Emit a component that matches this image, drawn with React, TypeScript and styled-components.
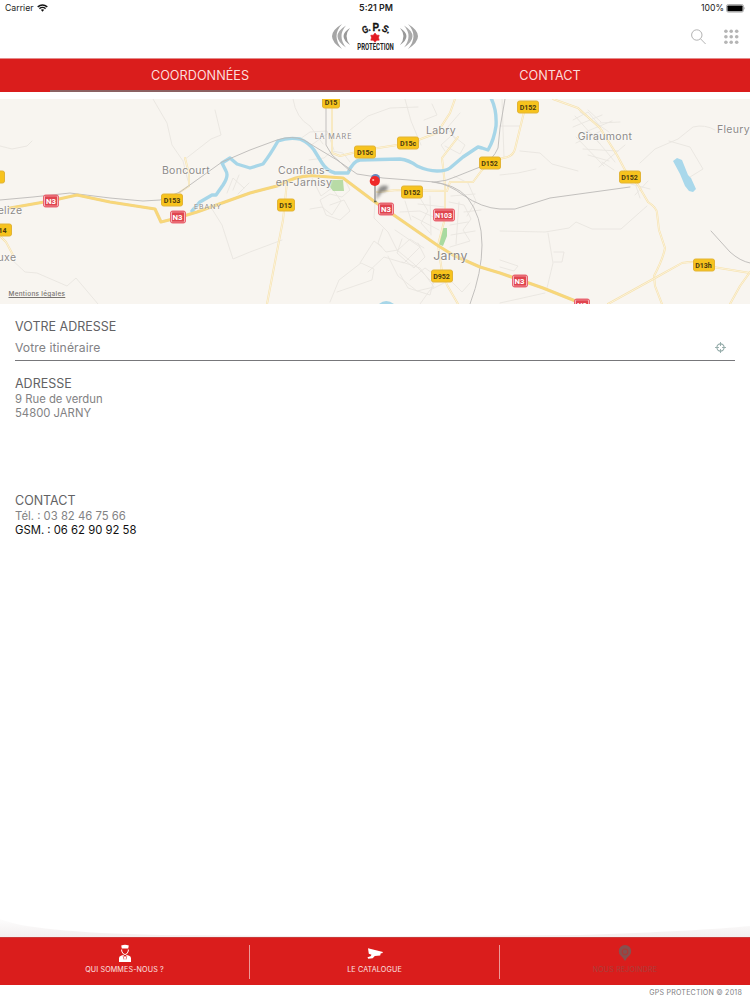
import React from 'react';
import styled, { createGlobalStyle } from 'styled-components';

const GlobalStyle = createGlobalStyle`
  * {
    box-sizing: border-box;
  }
  body {
    margin: 0;
    background: #fff;
    font-family: Inter, 'Liberation Sans', sans-serif;
    color: #5c5c5e;
  }
`;

const Page = styled.div`
  width: 750px;
  height: 1000px;
  display: flex;
  flex-direction: column;
  overflow: hidden;
`;

const StatusBar = styled.div`
  height: 16px;
  padding: 0 4px 0 5px;
  display: grid;
  grid-template-columns: 1fr auto 1fr;
  align-items: center;
  font-size: 8.7px;
  line-height: 16px;
  color: #222;
`;

const StatusSide = styled.div<{ $end?: boolean }>`
  display: flex;
  align-items: center;
  justify-content: ${({ $end }) => ($end ? 'flex-end' : 'flex-start')};
  gap: ${({ $end }) => ($end ? '2px' : '4px')};
`;

const Clock = styled.div`
  font-weight: 600;
  font-size: 8.9px;
  padding-left: 1px;
`;

const Header = styled.header`
  height: 43px;
  display: grid;
  grid-template-columns: 1fr 86px 1fr;
  border-bottom: 1px solid #e58a8a;
`;

const HeaderActions = styled.div`
  display: flex;
  justify-content: flex-end;
  gap: 17px;
  padding: 13px 10px 0 0;
`;

const Logo = styled.svg`
  grid-column: 2;
  display: block;
`;

const Tabs = styled.nav`
  height: 33px;
  flex: none;
  display: flex;
  padding: 0 50px;
  background: #da1d1c;
`;

const Tab = styled.div<{ $active?: boolean }>`
  width: 300px;
  padding-top: 2px;
  display: flex;
  align-items: center;
  justify-content: center;
  font-size: 12.7px;
  color: #fbdcdb;
  border-bottom: 2px solid ${({ $active }) => ($active ? '#8b6263' : '#da1d1c')};

  & + & {
    width: 400px;
    margin-right: -50px;
  }
`;

const MapView = styled.div`
  position: relative;
  flex: none;
  width: 750px;
  height: 205px;
  margin-top: 7px;
  overflow: hidden;
  background: #f8f5f0;

  > svg {
    display: block;
  }
`;

const Place = styled.span<{ $x: number; $y: number; $size?: number; $spacing?: number }>`
  position: absolute;
  left: ${({ $x }) => $x}px;
  top: ${({ $y }) => $y - 99}px;
  transform: translate(-50%, -50%);
  font-size: ${({ $size }) => $size || 10.5}px;
  letter-spacing: ${({ $spacing }) => $spacing ?? 0.35}px;
  line-height: 12px;
  text-align: center;
  white-space: pre;
  color: #8d8a87;
  text-shadow: 0 0 2px #fff, 0 0 2px #fff;
`;

const Shield = styled.span<{ $x: number; $y: number; $national?: boolean; $wide?: boolean }>`
  position: absolute;
  left: ${({ $x }) => $x}px;
  top: ${({ $y }) => $y - 99}px;
  transform: translate(-50%, -50%);
  width: ${({ $wide, $national }) => ($wide ? 22 : $national ? 16 : 18)}px;
  height: 13px;
  display: flex;
  align-items: center;
  justify-content: center;
  border-radius: 2.5px;
  border: 1px solid ${({ $national }) => ($national ? '#ea6672' : '#e2b437')};
  box-shadow: ${({ $national }) => ($national ? 'inset 0 0 0 0.8px #fbd0d3' : 'none')};
  background: ${({ $national }) => ($national ? '#e0454f' : '#f7c31d')};
  color: ${({ $national }) => ($national ? '#fff' : '#4a3a10')};
  font-family: Roboto, 'Liberation Sans', sans-serif;
  font-size: ${({ $national, $wide }) => ($national && !$wide ? 7.8 : 7.1)}px;
  letter-spacing: -0.1px;
  font-weight: 700;
`;

const Legal = styled.a`
  position: absolute;
  left: 8.5px;
  bottom: 5px;
  font-size: 6.4px;
  line-height: 10px;
  letter-spacing: 0.31px;
  font-weight: 500;
  color: #77736f;
  text-decoration: underline;
`;

const Content = styled.main`
  flex: 1;
  display: flex;
  flex-direction: column;
  padding: 15px 15px 0;
`;

const Title = styled.h2`
  margin: 0;
  font-size: 12.5px;
  line-height: 16px;
  font-weight: 400;
  color: #626264;
`;

const RouteField = styled.div`
  height: 26px;
  padding: 0 9px 1px 0;
  margin-bottom: 15px;
  display: flex;
  align-items: center;
  justify-content: space-between;
  border-bottom: 1px solid #77777a;
  font-size: 12.2px;
  letter-spacing: 0.08px;
  color: #828285;
`;

const Block = styled.section`
  height: 117px;
`;

const Line = styled.div<{ $dark?: boolean }>`
  font-size: 11.3px;
  line-height: 14px;
  color: ${({ $dark }) => ($dark ? '#111' : '#828284')};
`;

const Swoosh = styled.svg`
  display: block;
  flex: none;
`;

const BottomBar = styled.nav`
  flex: none;
  height: 48px;
  display: grid;
  grid-template-columns: 250px 250px 250px;
  align-items: center;
  background: #da1d1c;
  border-top: 1px solid #c93a3a;
`;

const BottomItem = styled.div<{ $muted?: boolean }>`
  height: 34px;
  display: flex;
  flex-direction: column;
  align-items: center;
  gap: 3px;
  font-size: 7.2px;
  line-height: 8px;
  letter-spacing: 0.12px;
  color: ${({ $muted }) => ($muted ? '#ab403d' : '#fbe3e2')};
  border-right: 1px solid #ed9997;

  &:last-child {
    border-right: none;
  }
  > svg {
    margin-top: -1px;
  }
`;

const Copyright = styled.footer`
  flex: none;
  height: 15px;
  padding-right: 8px;
  text-align: right;
  font-size: 7.1px;
  line-height: 16px;
  letter-spacing: 0.2px;
  color: #828284;
`;

const places = [
  { text: 'Boncourt', x: 186, y: 171 },
  { text: 'elize', x: 10, y: 211 },
  { text: 'uxe', x: 7, y: 257.5 },
  { text: 'EBANY', x: 208, y: 206.5, size: 6.8, spacing: 1 },
  { text: 'LA MARE', x: 333.5, y: 137, size: 7.2, spacing: 0.9 },
  { text: 'Conflans-\nen-Jarnisy', x: 304, y: 176.5 },
  { text: 'Labry', x: 441, y: 130.5 },
  { text: 'Jarny', x: 450.5, y: 256, size: 12.3 },
  { text: 'Giraumont', x: 605, y: 137 },
  { text: 'Fleury', x: 733.5, y: 130 },
];

const shields = [
  { text: 'D15', x: 331, y: 102 },
  { text: 'D15c', x: 365, y: 151.5, wide: true },
  { text: 'D15c', x: 408, y: 143, wide: true },
  { text: 'D152', x: 489.5, y: 163, wide: true },
  { text: 'D152', x: 412, y: 192, wide: true },
  { text: 'D15', x: 285.5, y: 204.5 },
  { text: 'D952', x: 441.5, y: 276, wide: true },
  { text: 'D152', x: 528, y: 106.5, wide: true },
  { text: 'D152', x: 629.5, y: 177, wide: true },
  { text: 'D13h', x: 703.5, y: 264.5, wide: true },
  { text: 'D153', x: 172, y: 199.5, wide: true },
  { text: '14', x: 2.5, y: 230 },
  { text: '3', x: -4, y: 177 },
  { text: 'N3', x: 51, y: 201, national: true },
  { text: 'N3', x: 177.5, y: 217, national: true },
  { text: 'N3', x: 386, y: 209, national: true },
  { text: 'N103', x: 443.5, y: 215, national: true, wide: true },
  { text: 'N3', x: 519.5, y: 281, national: true },
  { text: 'N3', x: 582, y: 304.5, national: true },
];

const nationalRoad =
  'M10 208L50 201L77 195L110 202L155 209L161 222L177 218L197 212L250 193L277 186Q300 174 316 176L343 178L375 202L437 245L453 255L480 267L500 273L543 288L573 300L584 305';

const river =
  'M192 211L200 202L212 195L216 195L223 185Q229 176 226 171L222 163L230 158L237 164L250 168L263 164Q270 155 278 141Q288 137 300 139Q309 143 314 150L322 163Q327 171 335 173L348 173Q353 161 360 160L400 159Q409 160 417 166Q428 171 437 171Q446 171 450 168L463 157L478 147L482 148L488 150Q494 140 496 126Q497 110 491 98';

const localRoads = [
  'M332 108L332 153L340 156L365 150L410 143L437 133L450 113L455 99',
  'M287 182L283 220L267 304',
  'M458 137L442 158L445 185L445 218L438 245L442 272L447 285L458 304',
  'M377 192L397 190L447 191L450 182L473 182L482 170L490 162L503 158Q513 157 515 149L524 112',
  'M553 99L578 108L600 128L617 155L625 170L638 185L648 202Q657 208 657 213L659 230L665 248Q663 259 654 276L655 286L662 304',
  'M608 304L655 278L682 263Q700 260 713 267L750 273',
  'M750 272L740 286L730 304',
  'M185 158L189 174L189 186L180 192',
  'M0 236L6 242L13 255',
];

const minorRoads = [
  'M153 99L167 123L172 145L183 161L188 181',
  'M215 110L221 135L211 139L184 160',
  'M0 146L12 149L27 146L32 141',
  'M10 258L25 272L37 273L67 286L76 278L98 304',
  'M212 209L222 225L233 259L250 252L282 240',
  'M293 99Q296 118 310 126L323 144',
  'M405 99L411 121L421 145',
  'M350 130L368 116L390 108L418 107',
  'M375 202L374 218L388 232L397 250L414 264L434 284',
  'M383 229L378 243L386 252L398 250L410 239L424 248',
  'M388 256L398 276L417 291L434 287L420 268L402 262',
  'M402 239L397 253L414 268L425 257L418 243',
  'M395 230L420 247L404 263L384 257L368 272',
  'M410 280L425 268L435 275L430 295L408 288L400 274',
  'M420 304L430 290L450 280L462 292L470 283',
  'M330 302L339 280L361 263L374 269L372 280L337 292',
  'M360 263L374 241L382 247',
  'M345 180L350 190L342 197L330 194L320 200L326 215L340 220L350 211L344 200L330 205',
  'M312 178L321 196L332 188L341 201L332 215L322 207L310 209',
  'M449 202L464 205L471 219L463 230L470 241L450 247',
  'M450 225L468 222M451 235L475 231M459 202L456 244M464 212L481 210',
  'M420 198L428 211L421 223L430 233M405 201L411 220M418 204L445 207',
  'M400 212L420 211L438 219M430 196L431 235M412 216L439 230',
  'M454 176L468 183L476 201L467 216M451 196L475 194',
  'M445 146L460 154L465 145L452 135L441 145L445 151',
  'M424 120L437 115L432 104M460 113L447 128L456 140',
  'M350 162L343 153L332 151L324 158L309 160',
  'M300 139L310 132L327 131L334 150M310 146L327 134',
  'M520 151L540 153L552 164L578 171',
  'M500 175L518 173L536 169',
  'M500 126L520 126M502 99L504 158',
  'M640 163L655 149L678 139L693 127Q705 124 715 130',
  'M669 141L690 147L703 169L690 177',
  'M500 231L545 232L569 228L576 222L592 229L621 229L647 206',
  'M548 233L553 263L547 288M554 252L564 252L562 262L554 262',
  'M500 260L518 266L514 271L500 267M500 303L545 293',
  'M573 120L588 112L600 126M573 127L602 115M578 135L612 121M576 143L603 130M583 149L618 151M588 155L609 161M599 167L625 145M602 162L614 170',
  'M575 116L600 144M580 112L609 132M588 110L601 122M576 137L604 166M591 133L615 162M600 123L620 122',
  'M635 195L648 181M631 184L650 189M636 186L640 198',
  'M227 193L233 178L244 188M233 190L239 175M238 194L249 183',
];

const railways = [
  'M0 200L33 197L70 193L110 198L143 201L160 200L180 192L222 162L250 150L277 140Q292 135 304 140L317 148L337 160L357 174L383 178L435 182Q447 181 455 177L480 167Q493 160 498 148L500 128L505 99',
  'M326 99L326 145L332 155L350 171',
  'M432 182Q455 184 467 197Q482 216 482 245Q482 272 470 304',
  'M435 182Q450 185 463 195Q482 208 500 209L515 209L550 198L630 187',
  'M711 231L730 252Q740 261 750 263',
];

const MapDrawing: React.FC = () => (
  <svg width="750" height="205" viewBox="0 99 750 205" fill="none" strokeLinejoin="round" strokeLinecap="round">
    <defs>
      <filter id="pinShadow" x="-50%" y="-50%" width="200%" height="200%">
        <feGaussianBlur stdDeviation="1.5" />
      </filter>
    </defs>
    {minorRoads.map(d => (
      <path key={d} d={d} stroke="#e9e5e0" strokeWidth="0.9" />
    ))}
    <path d="M331 180L343 180L344 191L333 191L330 187Z" fill="#b8dba6" />
    <path d="M442 228L447 228L447 236L443 246L438 244Z" fill="#a9daa0" />
    {localRoads.map(d => (
      <g key={d}>
        <path d={d} stroke="#f6e1ac" strokeWidth="2" />
        <path d={d} stroke="#fdf6e4" strokeWidth="0.8" />
      </g>
    ))}
    <path d={river} stroke="#a7d6e8" strokeWidth="3.4" />
    <path d="M673 161L677 158L682 160L688 175L691 178L696 189L693 192L689 191L685 186L680 174Z" fill="#a9d8eb" />
    <path d="M379 304Q386 298 394 304Z" fill="#a7d6e8" />
    {railways.map(d => (
      <path key={d} d={d} stroke="#bcbab8" strokeWidth="0.9" />
    ))}
    <path d={nationalRoad} stroke="#efd58a" strokeWidth="3.2" />
    <path d={nationalRoad} stroke="#f9d778" strokeWidth="2" />
  </svg>
);

const Pin = styled.svg`
  position: absolute;
  left: 366px;
  top: 73px;
`;

const Waves = () => (
  <g>
    <path d="M10 8Q-10 20 10 33Q-1 20 10 8Z" fill="#a5a5a5" />
    <path d="M14 9.5Q-3 20 14 31.5Q5 20 14 9.5Z" fill="#aaa" />
    <path d="M18 12Q5 20 18 29Q11 20 18 12Z" fill="#999" />
  </g>
);

const App: React.FC = () => {
  return (
    <>
      <GlobalStyle />
      <Page>
        <StatusBar>
          <StatusSide>
            <span>Carrier</span>
            <svg width="11" height="8" viewBox="0 0 11 8" fill="none" stroke="#111">
              <path d="M0.7 2.8Q5.5 -1 10.3 2.8" strokeWidth="1.5" />
              <path d="M2.4 4.6Q5.5 2.1 8.6 4.6" strokeWidth="1.4" />
              <path d="M3.8 5.7Q5.5 4.6 7.2 5.7L5.5 7.7Z" fill="#111" stroke="none" />
            </svg>
          </StatusSide>
          <Clock>5:21 PM</Clock>
          <StatusSide $end>
            <span>100%</span>
            <svg width="20" height="9" viewBox="0 0 20 9">
              <rect x="0.5" y="0.5" width="17" height="7.6" rx="1.8" fill="#fff" stroke="#999" strokeWidth="0.8" />
              <rect x="1.4" y="1.4" width="15.2" height="5.8" rx="0.8" fill="#000" />
              <path d="M18.4 2.8Q19.8 4.3 18.4 5.8Z" fill="#999" />
            </svg>
          </StatusSide>
        </StatusBar>

        <Header>
          <Logo width="86" height="42" viewBox="0 0 86 42">
            <Waves />
            <g transform="translate(86 0) scale(-1 1)">
              <Waves />
            </g>
            <g fontFamily="'Liberation Sans', sans-serif" fontWeight="700" fontStyle="italic" fontSize="10" fill="#111" stroke="#111" strokeWidth="0.3">
              <text transform="translate(32 18) rotate(-28)" textLength="8" lengthAdjust="spacingAndGlyphs">G.</text>
              <text x="40.5" y="14.5" fontSize="10" fontStyle="normal" textLength="8" lengthAdjust="spacingAndGlyphs">P.</text>
              <text transform="translate(49.5 15) rotate(20)" textLength="8" lengthAdjust="spacingAndGlyphs">S.</text>
            </g>
            <path d="M43 17L44.8 19.2L47.2 19.2L46.5 21.7L47.2 24.2L44.8 24.2L43 26.3L41.2 24.2L38.8 24.2L39.5 21.7L38.8 19.2L41.2 19.2Z" fill="#e31b23" stroke="#e31b23" strokeWidth="0.6" />
            <text x="25.3" y="34.3" textLength="36.5" lengthAdjust="spacingAndGlyphs" fontFamily="Roboto, sans-serif" fontWeight="700" fontSize="9" fill="#222">
              PROTECTION
            </text>
          </Logo>
          <HeaderActions>
            <svg width="16" height="16" viewBox="0 0 16 16" fill="none" stroke="#b3b3b3" strokeWidth="1">
              <circle cx="6.8" cy="6" r="5.2" />
              <path d="M10.5 9.8L15.6 15" />
            </svg>
            <svg width="17" height="16" viewBox="0 0 17 16" fill="#b5b5b5">
              {[2.9, 8.2, 13.7].map(cx => [2.3, 7.8, 13.2].map(cy => <circle key={`${cx}-${cy}`} cx={cx} cy={cy} r="1.8" />))}
            </svg>
          </HeaderActions>
        </Header>

        <Tabs>
          <Tab $active>COORDONNÉES</Tab>
          <Tab>CONTACT</Tab>
        </Tabs>

        <MapView>
          <MapDrawing />
          {places.map(place => (
            <Place key={place.text} $x={place.x} $y={place.y} $size={place.size} $spacing={place.spacing}>
              {place.text}
            </Place>
          ))}
          {shields.map(shield => (
            <Shield key={`${shield.text}-${shield.x}`} $x={shield.x} $y={shield.y} $national={shield.national} $wide={shield.wide}>
              {shield.text}
            </Shield>
          ))}
          <Pin width="26" height="34" viewBox="366 172 26 34">
            <path d="M376 200L378 190Q380 184 388 186Q388 192 382 192Z" fill="#555" opacity="0.65" filter="url(#pinShadow)" />
            <path d="M375 184V201" stroke="#999" strokeWidth="1.5" />
            <path d="M374 201.5H376.5" stroke="#626b43" strokeWidth="1.5" />
            <circle cx="375.5" cy="178.5" r="4.5" fill="#6687bd" />
            <circle cx="374.8" cy="181" r="5.1" fill="#ef2929" />
            <circle cx="373.2" cy="180" r="1.1" fill="#ffb5ad" />
          </Pin>
          <Legal>Mentions légales</Legal>
        </MapView>

        <Content>
          <Title>VOTRE ADRESSE</Title>
          <RouteField>
            <span>Votre itinéraire</span>
            <svg width="11" height="11" viewBox="0 0 11 11" fill="none" stroke="#93aaa8">
              <circle cx="5.5" cy="5.5" r="3.6" strokeWidth="1.1" />
              <path d="M5.5 0V4M5.5 7V11M0 5.5H4M7 5.5H11" strokeWidth="0.9" />
            </svg>
          </RouteField>
          <Block>
            <Title>ADRESSE</Title>
            <Line>9 Rue de verdun</Line>
            <Line>54800 JARNY</Line>
          </Block>
          <Block>
            <Title>CONTACT</Title>
            <Line>Tél. : 03 82 46 75 66</Line>
            <Line $dark>GSM. : 06 62 90 92 58</Line>
          </Block>
        </Content>

        <Swoosh width="750" height="22" viewBox="0 0 750 22">
          <defs>
            <linearGradient id="swooshFade" x1="0" y1="0" x2="0" y2="1">
              <stop offset="0" stopColor="#fdfdfd" />
              <stop offset="1" stopColor="#f3efef" />
            </linearGradient>
          </defs>
          <path d="M0 4Q30 17 160 20L375 21.5L580 20Q700 16 750 11V22H0Z" fill="url(#swooshFade)" />
        </Swoosh>
        <BottomBar>
          <BottomItem>
            <svg width="14" height="19" viewBox="0 0 14 19" fill="#fff">
              <path d="M3.2 1.5Q7 -0.2 10.8 1.5L10.2 4.6H3.8Z" />
              <path d="M3.7 5.5V7Q4.3 10 7 10.6Q9.7 10 10.3 7V5.5" fill="none" stroke="#fff" strokeWidth="1" />
              <path d="M1 18V14Q1 12 3.5 11.5L5.3 11L7 13L8.7 11L10.5 11.5Q13 12 13 14V18Z" />
              <path d="M5.2 12L6 15.5M8.8 12L8 15.5" stroke="#da1d1c" strokeWidth="0.6" />
            </svg>
            <span>QUI SOMMES-NOUS ?</span>
          </BottomItem>
          <BottomItem>
            <svg width="18" height="19" viewBox="0 0 18 19" fill="#fff">
              <path d="M2 4.2L17 7.9L16.2 9.2L14.8 9.3L14.2 11.4L8.8 12L6.7 14.2L2.2 14.7L1.5 13.2L4.6 12.2L5.5 10.7L2.8 9.8Z" />
            </svg>
            <span>LE CATALOGUE</span>
          </BottomItem>
          <BottomItem $muted>
            <svg width="14" height="19" viewBox="0 0 14 19">
              <path d="M7 17Q5.5 14 2.6 11.5A6.2 6.2 0 1 1 11.4 11.5Q8.5 14 7 17Z" fill="#87504f" />
              <circle cx="7" cy="7.8" r="2.8" fill="none" stroke="#a93a37" strokeWidth="1.2" />
            </svg>
            <span>NOUS REJOINDRE</span>
          </BottomItem>
        </BottomBar>
        <Copyright>GPS PROTECTION © 2018</Copyright>
      </Page>
    </>
  );
};

export default App;
